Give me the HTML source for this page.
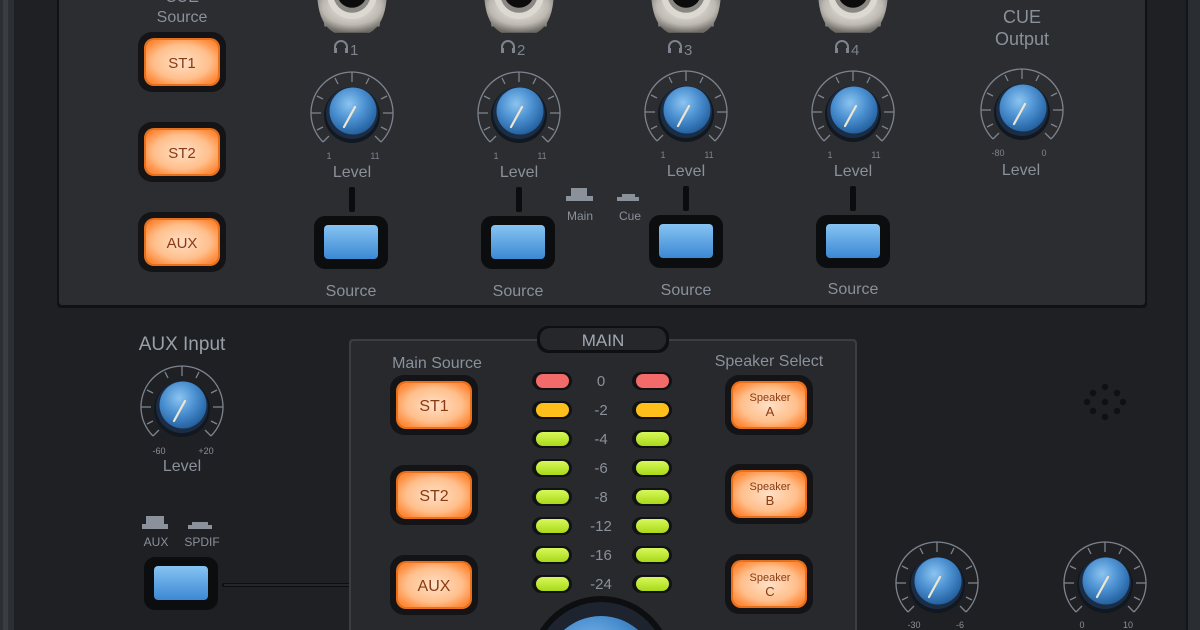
<!DOCTYPE html>
<html><head><meta charset="utf-8"><style>
html,body{margin:0;padding:0;background:#1d1f23;overflow:hidden;width:1200px;height:630px}
svg{display:block}
text{font-family:"Liberation Sans",sans-serif;}
</style></head><body>
<svg width="1200" height="630" viewBox="0 0 1200 630" xmlns="http://www.w3.org/2000/svg">
<defs>
<radialGradient id="kb" cx="0.42" cy="0.35" r="0.7">
<stop offset="0" stop-color="#8cc4f0"/><stop offset="0.5" stop-color="#4a8fd0"/><stop offset="1" stop-color="#1f5a98"/>
</radialGradient>
<radialGradient id="og" cx="0.5" cy="0.5" r="0.6">
<stop offset="0" stop-color="#ffe0c6"/><stop offset="0.65" stop-color="#ffbf8c"/><stop offset="1" stop-color="#ff8a3a"/>
</radialGradient>
<linearGradient id="bg" x1="0" y1="0" x2="0" y2="1">
<stop offset="0" stop-color="#86c4f2"/><stop offset="1" stop-color="#3c88d4"/>
</linearGradient>
<radialGradient id="jk" cx="0.5" cy="0.4" r="0.6">
<stop offset="0" stop-color="#f4f2ee"/><stop offset="0.7" stop-color="#bdb9b2"/><stop offset="1" stop-color="#6f6b66"/>
</radialGradient>
<linearGradient id="gl" x1="0" y1="0" x2="0" y2="1"><stop offset="0" stop-color="#d8f85a"/><stop offset="1" stop-color="#a8d81a"/></linearGradient>
<g id="knob">
<path d="M -29 29 A 41 41 0 1 1 29 29" fill="none" stroke="#7d848d" stroke-width="1.3"/>
<g stroke="#7d848d" stroke-width="1.3">
<line x1="-29" y1="29" x2="-23" y2="23"/><line x1="29" y1="29" x2="23" y2="23"/>
<line x1="-41" y1="0" x2="-31" y2="0"/><line x1="41" y1="0" x2="31" y2="0"/>
<line x1="0" y1="-41" x2="0" y2="-31"/>
<line x1="-35" y1="-17" x2="-29" y2="-14"/><line x1="35" y1="-17" x2="29" y2="-14"/>
<line x1="-17" y1="-35" x2="-14" y2="-29"/><line x1="17" y1="-35" x2="14" y2="-29"/>
<line x1="-35" y1="17" x2="-29" y2="14"/><line x1="35" y1="17" x2="29" y2="14"/>
</g>
<circle cx="0" cy="2" r="28" fill="#121820"/>
<circle cx="0" cy="0" r="26" fill="#1b2d45"/>
<circle cx="1" cy="-2" r="23.5" fill="url(#kb)"/>
<line x1="3" y1="-6" x2="-8" y2="14" stroke="#efe6cf" stroke-width="2.2" stroke-linecap="round"/>
</g>
<g id="obtn">
<rect x="-44" y="-30" width="88" height="60" rx="14" fill="#141416"/>
<rect x="-38" y="-24" width="76" height="48" rx="10" fill="#ff7a1c" opacity="0.9"/>
<rect x="-36" y="-22" width="72" height="44" rx="9" fill="url(#og)"/>
</g>
<g id="bbtn">
<rect x="-37" y="-27" width="74" height="53" rx="11" fill="#0c0d0f"/>
<rect x="-27" y="-18" width="54" height="34" rx="4" fill="url(#bg)"/>
</g>
<g id="jack">
<polygon points="-27,-10 -14,-30 14,-30 27,-10 22,26 -22,26" fill="#8d8984"/>
<path d="M -28 -4 Q -28 24 -14 31 L 14 31 Q 28 24 28 -4 Z" fill="url(#jk)"/>
<circle cx="0" cy="0" r="20" fill="#dcd8d2"/>
<circle cx="0" cy="0" r="15" fill="#8b8782"/>
<circle cx="0" cy="-1" r="12" fill="#0c0c0d"/>
</g>
<g id="led"><rect x="-20" y="-9" width="40" height="18" rx="9" fill="#111214"/></g>
<g id="hp"><path d="M -6 6 V 1 A 6 6 0 0 1 6 1 V 6" fill="none" stroke="#7d848d" stroke-width="2"/><rect x="-7" y="2" width="3" height="5" fill="#7d848d"/><rect x="4" y="2" width="3" height="5" fill="#7d848d"/></g>
</defs>

<rect width="1200" height="630" fill="#1e2024"/>
<rect x="0" y="0" width="14" height="630" fill="#2c2f34"/>
<rect x="3" y="0" width="5" height="630" fill="#3a3e44"/>
<rect x="1186" y="0" width="14" height="630" fill="#2a2d31"/>
<rect x="1186" y="0" width="2" height="630" fill="#141518"/>

<rect x="57" y="-5" width="1090" height="313" rx="4" fill="#101113"/>
<rect x="59" y="-5" width="1086" height="310" rx="3" fill="#2b2d31"/>

<use href="#jack" transform="translate(352,-6) scale(1.25)"/>
<use href="#jack" transform="translate(519,-6) scale(1.25)"/>
<use href="#jack" transform="translate(686,-6) scale(1.25)"/>
<use href="#jack" transform="translate(853,-6) scale(1.25)"/>

<g fill="#8a919a" text-anchor="middle">
<text x="182" y="2" font-size="16">CUE</text>
<text x="182" y="22" font-size="16">Source</text>
<text x="1022" y="23" font-size="18">CUE</text>
<text x="1022" y="45" font-size="18">Output</text>
</g>

<use href="#obtn" x="182" y="62"/><use href="#obtn" x="182" y="152"/><use href="#obtn" x="182" y="242"/>
<g fill="#8a3a12" font-size="15" text-anchor="middle">
<text x="182" y="68">ST1</text><text x="182" y="158">ST2</text><text x="182" y="248">AUX</text>
</g>

<g fill="#7d848d" font-size="15">
<use href="#hp" x="341" y="46"/><text x="350" y="55">1</text>
<use href="#hp" x="508" y="46"/><text x="517" y="55">2</text>
<use href="#hp" x="675" y="46"/><text x="684" y="55">3</text>
<use href="#hp" x="842" y="46"/><text x="851" y="55">4</text>
</g>

<use href="#knob" x="352" y="113"/><use href="#knob" x="519" y="113"/><use href="#knob" x="686" y="112"/><use href="#knob" x="853" y="112"/><use href="#knob" x="1022" y="110"/>

<g fill="#7d848d" font-size="9" text-anchor="middle">
<text x="329" y="159">1</text><text x="375" y="159">11</text>
<text x="496" y="159">1</text><text x="542" y="159">11</text>
<text x="663" y="158">1</text><text x="709" y="158">11</text>
<text x="830" y="158">1</text><text x="876" y="158">11</text>
<text x="998" y="156">-80</text><text x="1044" y="156">0</text>
</g>
<g fill="#8a919a" font-size="16" text-anchor="middle">
<text x="352" y="177">Level</text><text x="519" y="177">Level</text><text x="686" y="176">Level</text><text x="853" y="176">Level</text><text x="1021" y="175">Level</text>
<text x="351" y="296">Source</text><text x="518" y="296">Source</text><text x="686" y="295">Source</text><text x="853" y="294">Source</text>
</g>

<g fill="#0b0c0e"><rect x="349" y="187" width="6" height="25" rx="2"/><rect x="516" y="187" width="6" height="25" rx="2"/><rect x="683" y="186" width="6" height="25" rx="2"/><rect x="850" y="186" width="6" height="25" rx="2"/></g>

<use href="#bbtn" x="351" y="243"/><use href="#bbtn" x="518" y="243"/><use href="#bbtn" x="686" y="242"/><use href="#bbtn" x="853" y="242"/>

<g fill="#8a919a"><rect x="571" y="188" width="16" height="8"/><rect x="566" y="196" width="27" height="5"/>
<rect x="622" y="194" width="13" height="3"/><rect x="617" y="197" width="22" height="4"/></g>
<g fill="#8a919a" font-size="12" text-anchor="middle"><text x="580" y="220">Main</text><text x="630" y="220">Cue</text></g>

<text x="182" y="350" fill="#9aa1aa" font-size="19" text-anchor="middle">AUX Input</text>
<use href="#knob" x="182" y="407"/>
<g fill="#8a919a" font-size="9" text-anchor="middle"><text x="159" y="454">-60</text><text x="206" y="454">+20</text></g>
<text x="182" y="471" fill="#8a919a" font-size="16" text-anchor="middle">Level</text>
<g fill="#8a919a"><rect x="146" y="516" width="18" height="8"/><rect x="142" y="524" width="26" height="5"/>
<rect x="192" y="522" width="16" height="3"/><rect x="188" y="525" width="24" height="4"/></g>
<g fill="#8a919a" font-size="12" text-anchor="middle"><text x="156" y="546">AUX</text><text x="202" y="546">SPDIF</text></g>
<use href="#bbtn" x="181" y="584"/>
<rect x="222" y="583" width="160" height="4" rx="2" fill="#0d0e10"/>
<line x1="224" y1="585" x2="380" y2="585" stroke="#3a3d42" stroke-width="1"/>

<rect x="349" y="339" width="508" height="300" rx="4" fill="#3a3d42"/>
<rect x="351" y="341" width="504" height="300" rx="3" fill="#27292d"/>
<rect x="537" y="326" width="132" height="27" rx="11" fill="#0e0f11"/>
<rect x="540" y="328" width="126" height="22" rx="10" fill="#25272b"/>
<text x="603" y="346" fill="#a2a9b2" font-size="17" text-anchor="middle">MAIN</text>
<g fill="#8a919a" font-size="16" text-anchor="middle">
<text x="437" y="368">Main Source</text><text x="769" y="366">Speaker Select</text>
</g>

<use href="#obtn" x="434" y="405"/><use href="#obtn" x="434" y="495"/><use href="#obtn" x="434" y="585"/>
<g fill="#8a3a12" font-size="16" text-anchor="middle">
<text x="434" y="411">ST1</text><text x="434" y="501">ST2</text><text x="434" y="591">AUX</text>
</g>
<use href="#obtn" x="769" y="405"/><use href="#obtn" x="769" y="494"/><use href="#obtn" x="769" y="584"/>
<g fill="#8a3a12" font-size="11" text-anchor="middle">
<text x="770" y="401">Speaker</text><text x="770" y="416" font-size="13">A</text>
<text x="770" y="490">Speaker</text><text x="770" y="505" font-size="13">B</text>
<text x="770" y="581">Speaker</text><text x="770" y="596" font-size="13">C</text>
</g>

<g>
<use href="#led" x="552" y="381"/><use href="#led" x="652" y="381"/>
<use href="#led" x="552" y="410"/><use href="#led" x="652" y="410"/>
<use href="#led" x="552" y="439"/><use href="#led" x="652" y="439"/>
<use href="#led" x="552" y="468"/><use href="#led" x="652" y="468"/>
<use href="#led" x="552" y="497"/><use href="#led" x="652" y="497"/>
<use href="#led" x="552" y="526"/><use href="#led" x="652" y="526"/>
<use href="#led" x="552" y="555"/><use href="#led" x="652" y="555"/>
<use href="#led" x="552" y="584"/><use href="#led" x="652" y="584"/>
</g>
<g>
<rect x="536" y="374" width="33" height="14" rx="7" fill="#f36a6a"/><rect x="636" y="374" width="33" height="14" rx="7" fill="#f36a6a"/>
<rect x="536" y="403" width="33" height="14" rx="7" fill="#ffbf1a"/><rect x="636" y="403" width="33" height="14" rx="7" fill="#ffbf1a"/>
</g>
<g fill="url(#gl)">
<rect x="536" y="432" width="33" height="14" rx="7"/><rect x="636" y="432" width="33" height="14" rx="7"/>
<rect x="536" y="461" width="33" height="14" rx="7"/><rect x="636" y="461" width="33" height="14" rx="7"/>
<rect x="536" y="490" width="33" height="14" rx="7"/><rect x="636" y="490" width="33" height="14" rx="7"/>
<rect x="536" y="519" width="33" height="14" rx="7"/><rect x="636" y="519" width="33" height="14" rx="7"/>
<rect x="536" y="548" width="33" height="14" rx="7"/><rect x="636" y="548" width="33" height="14" rx="7"/>
<rect x="536" y="577" width="33" height="14" rx="7"/><rect x="636" y="577" width="33" height="14" rx="7"/>
</g>
<g fill="#8a919a" font-size="15" text-anchor="middle">
<text x="601" y="386">0</text><text x="601" y="415">-2</text><text x="601" y="444">-4</text><text x="601" y="473">-6</text>
<text x="601" y="502">-8</text><text x="601" y="531">-12</text><text x="601" y="560">-16</text><text x="601" y="589">-24</text>
</g>

<circle cx="601" cy="668" r="72" fill="#0d0e10"/>
<circle cx="601" cy="668" r="66" fill="#1d2430"/>
<circle cx="601" cy="672" r="56" fill="url(#kb)"/>

<g fill="#0f1012">
<circle cx="1105" cy="387" r="3.2"/>
<circle cx="1093" cy="393" r="3.2"/><circle cx="1117" cy="393" r="3.2"/>
<circle cx="1087" cy="402" r="3.2"/><circle cx="1105" cy="402" r="3.2"/><circle cx="1123" cy="402" r="3.2"/>
<circle cx="1093" cy="411" r="3.2"/><circle cx="1117" cy="411" r="3.2"/>
<circle cx="1105" cy="417" r="3.2"/>
</g>

<use href="#knob" x="937" y="583"/><use href="#knob" x="1105" y="583"/>
<g fill="#8a919a" font-size="9" text-anchor="middle"><text x="914" y="628">-30</text><text x="960" y="628">-6</text><text x="1082" y="628">0</text><text x="1128" y="628">10</text></g>
</svg>
</body></html>
